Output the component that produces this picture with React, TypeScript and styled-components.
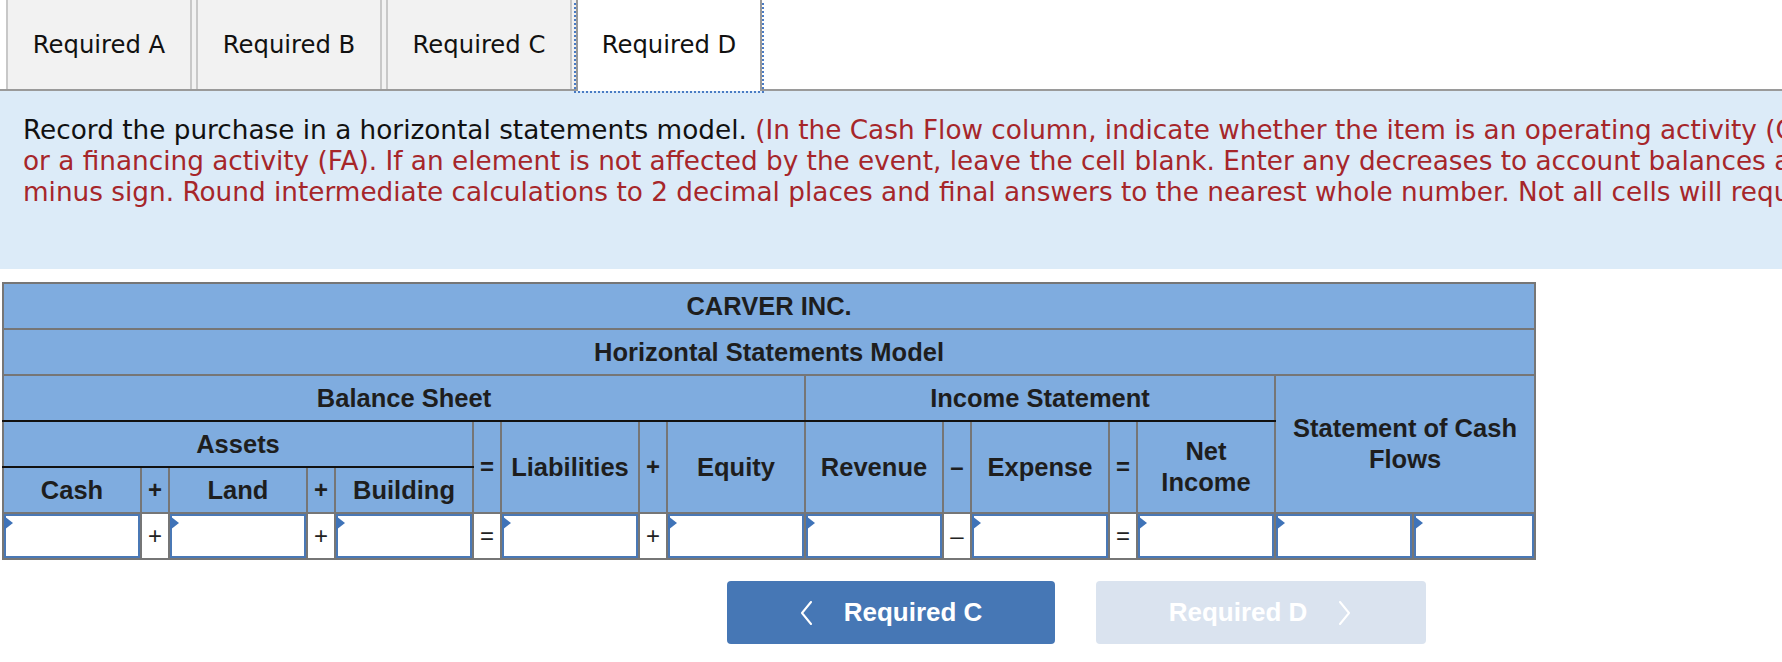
import React from 'react';
import styled, { createGlobalStyle } from 'styled-components';

const GlobalStyle = createGlobalStyle`
  html, body { margin: 0; padding: 0; background: #ffffff; overflow: hidden; }
  body { width: 1782px; height: 662px; }
  #root { width: 1782px; }
`;

const Page = styled.div`
  width: 2152px;
  display: flex;
  flex-direction: column;
`;

const TabStrip = styled.div`
  display: flex;
  align-items: flex-start;
  height: 91px;
  box-sizing: border-box;
  border-bottom: 2px solid #9a9a9a;
  padding-left: 6px;
`;

const Tab = styled.div<{ $active?: boolean }>`
  width: 186px;
  height: ${(p) => (p.$active ? '91px' : '89px')};
  box-sizing: border-box;
  margin-right: 4px;
  border-left: 2px solid ${(p) => (p.$active ? '#9a9a9a' : '#c8c8c8')};
  border-right: 2px solid ${(p) => (p.$active ? '#9a9a9a' : '#c8c8c8')};
  background: ${(p) => (p.$active ? '#ffffff' : '#f2f2f2')};
  box-shadow: ${(p) => (p.$active ? 'none' : '4px 0 0 #f2f2f2')};
  outline: ${(p) => (p.$active ? '2px dotted #4a7cc4' : 'none')};
  position: relative;
  z-index: ${(p) => (p.$active ? 1 : 0)};
  display: flex;
  align-items: center;
  justify-content: center;
  padding-bottom: ${(p) => (p.$active ? '2px' : '0')};
  font-family: 'DejaVu Sans', Verdana, sans-serif;
  font-size: 24.3px;
  color: #111111;
`;

const Instructions = styled.div`
  height: 178px;
  box-sizing: border-box;
  background: #dcebf8;
  padding: 24px 0 0 23px;
  font-family: 'DejaVu Sans', Verdana, sans-serif;
  font-size: 26.3px;
  line-height: 31px;
  color: #111111;
  white-space: nowrap;
`;

const Red = styled.span`
  color: #a6262a;
`;

const TableWrap = styled.div`
  padding: 13px 0 0 2px;
`;

const Sheet = styled.table`
  border-collapse: collapse;
  table-layout: fixed;
  width: 1532px;
  border: 2px solid #767676;
  font-family: 'Liberation Sans', Arial, sans-serif;
`;

const Row = styled.tr`
  height: 46px;
`;

const Head = styled.th<{ $black?: boolean }>`
  background: #7facdf;
  border: 2px solid #767676;
  border-bottom-color: ${(p) => (p.$black ? '#111111' : '#767676')};
  color: #1e1e1e;
  font-size: 25.5px;
  font-weight: 700;
  line-height: 31px;
  padding: 0 4px;
  text-align: center;
  vertical-align: middle;
  white-space: nowrap;
`;

const HeadOp = styled.th`
  background: #7facdf;
  border: 2px solid #767676;
  color: #1e1e1e;
  font-size: 24px;
  font-weight: 700;
  padding: 0;
  text-align: center;
  vertical-align: middle;
`;

const InputCell = styled.td`
  border: 2px solid #767676;
  padding: 0;
  background: #ffffff;
  vertical-align: middle;
`;

const OpCell = styled.td`
  border: 2px solid #767676;
  padding: 0;
  background: #ffffff;
  text-align: center;
  vertical-align: middle;
  font-size: 24px;
  color: #222222;
`;

const Field = styled.div`
  position: relative;
  height: 44px;
  &::before {
    content: '';
    position: absolute;
    left: 0;
    top: 2px;
    border-left: 9px solid #3f73b8;
    border-top: 7px solid transparent;
    border-bottom: 7px solid transparent;
  }
`;

const FieldInput = styled.input`
  box-sizing: border-box;
  display: block;
  width: 100%;
  height: 100%;
  margin: 0;
  padding: 0 8px;
  border: 2px solid #4a78b5;
  border-radius: 0;
  background: #ffffff;
  font-family: 'Liberation Sans', Arial, sans-serif;
  font-size: 20px;
  outline: none;
`;

const ButtonRow = styled.div`
  display: flex;
  justify-content: center;
  gap: 41px;
  padding-top: 21px;
`;

const NavButton = styled.button<{ $disabled?: boolean }>`
  width: ${(p) => (p.$disabled ? '330px' : '328px')};
  height: 63px;
  border: none;
  border-radius: 4px;
  background: ${(p) => (p.$disabled ? '#dae3ef' : '#4677b5')};
  color: #ffffff;
  font-family: 'Liberation Sans', Arial, sans-serif;
  font-size: 26px;
  font-weight: 700;
  display: flex;
  align-items: center;
  justify-content: center;
  gap: 31px;
  padding: 0;
  cursor: ${(p) => (p.$disabled ? 'default' : 'pointer')};
`;

const Chevron = ({ dir }: { dir: 'left' | 'right' }) => (
  <svg width="14" height="24" viewBox="0 0 14 24" aria-hidden="true">
    <polyline
      points={dir === 'left' ? '12,1 3,12 12,23' : '2,1 11,12 2,23'}
      fill="none"
      stroke="#ffffff"
      strokeWidth="2"
      strokeLinejoin="round"
      strokeLinecap="round"
    />
  </svg>
);

const cols = [138, 28, 138, 28, 138, 28, 138, 28, 138, 138, 28, 138, 28, 138, 138, 122];

const Input = () => (
  <InputCell>
    <Field>
      <FieldInput type="text" />
    </Field>
  </InputCell>
);

export default function App() {
  return (
    <>
      <GlobalStyle />
      <Page>
        <TabStrip>
          <Tab>Required A</Tab>
          <Tab>Required B</Tab>
          <Tab>Required C</Tab>
          <Tab $active>Required D</Tab>
        </TabStrip>
        <Instructions>
          Record the purchase in a horizontal statements model.{' '}
          <Red>(In the Cash Flow column, indicate whether the item is an operating activity (OA)</Red>
          <br />
          <Red>
            or a financing activity (FA). If an element is not affected by the event, leave the cell blank. Enter any
            decreases to account balances as a
          </Red>
          <br />
          <Red>
            minus sign. Round intermediate calculations to 2 decimal places and final answers to the nearest whole
            number. Not all cells will require input.)
          </Red>
        </Instructions>
        <TableWrap>
          <Sheet>
            <colgroup>
              {cols.map((w, i) => (
                <col key={i} style={{ width: w }} />
              ))}
            </colgroup>
            <thead>
              <Row>
                <Head colSpan={16}>CARVER INC.</Head>
              </Row>
              <Row>
                <Head colSpan={16}>Horizontal Statements Model</Head>
              </Row>
              <Row>
                <Head colSpan={9} $black>
                  Balance Sheet
                </Head>
                <Head colSpan={5} $black>
                  Income Statement
                </Head>
                <Head colSpan={2} rowSpan={3}>
                  Statement of Cash
                  <br />
                  Flows
                </Head>
              </Row>
              <Row>
                <Head colSpan={5} $black>
                  Assets
                </Head>
                <HeadOp rowSpan={2}>=</HeadOp>
                <Head rowSpan={2}>Liabilities</Head>
                <HeadOp rowSpan={2}>+</HeadOp>
                <Head rowSpan={2}>Equity</Head>
                <Head rowSpan={2}>Revenue</Head>
                <HeadOp rowSpan={2}>–</HeadOp>
                <Head rowSpan={2}>Expense</Head>
                <HeadOp rowSpan={2}>=</HeadOp>
                <Head rowSpan={2}>
                  Net
                  <br />
                  Income
                </Head>
              </Row>
              <Row>
                <Head>Cash</Head>
                <HeadOp>+</HeadOp>
                <Head>Land</Head>
                <HeadOp>+</HeadOp>
                <Head>Building</Head>
              </Row>
            </thead>
            <tbody>
              <Row>
                <Input />
                <OpCell>+</OpCell>
                <Input />
                <OpCell>+</OpCell>
                <Input />
                <OpCell>=</OpCell>
                <Input />
                <OpCell>+</OpCell>
                <Input />
                <Input />
                <OpCell>–</OpCell>
                <Input />
                <OpCell>=</OpCell>
                <Input />
                <Input />
                <Input />
              </Row>
            </tbody>
          </Sheet>
        </TableWrap>
        <ButtonRow>
          <NavButton type="button">
            <Chevron dir="left" />
            Required C
          </NavButton>
          <NavButton type="button" $disabled disabled>
            Required D
            <Chevron dir="right" />
          </NavButton>
        </ButtonRow>
      </Page>
    </>
  );
}
